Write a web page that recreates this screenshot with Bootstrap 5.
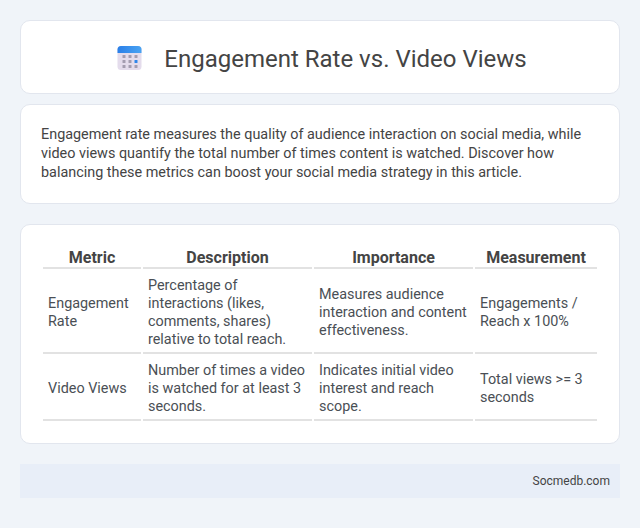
<!DOCTYPE html>
<html lang="en">
<head>
<meta charset="utf-8">
<title>Engagement Rate vs. Video Views</title>
<link href="https://cdn.jsdelivr.net/npm/bootstrap@5.3.0/dist/css/bootstrap.min.css" rel="stylesheet">
<script src="https://cdn.jsdelivr.net/npm/bootstrap@5.3.0/dist/js/bootstrap.bundle.min.js"></script>
<style>
body{background:#f0f4f9;font-family:Roboto,sans-serif;color:#444;padding:20px;margin:0}
.sheet{background:#fff;border:1px solid #e2e6ee;border-radius:10px}
.head-sheet{height:74px;margin-bottom:10px;gap:19px}
.head-sheet h1{font-size:24px;font-weight:400;color:#444;margin:0;line-height:1.2;padding-top:5px}
.intro-sheet{height:100px;margin-bottom:20px;padding:20px 20px;font-size:14.4px;line-height:19px;color:#444}
.table-sheet{height:220px;margin-bottom:20px;padding:21px 20px}
.metric-table{border-collapse:separate;border-spacing:2px;width:558px;table-layout:fixed;font-size:14.4px;line-height:18px;color:#4a4f55}
.metric-table th{font-size:16px;font-weight:700;line-height:19px;text-align:center;color:#444;border-bottom:2px solid #e2e2e2;padding:0;height:21px}
.metric-table td{border-bottom:2px solid #e2e2e2;padding:5.5px 5px 3.5px;vertical-align:middle}
.foot-bar{background:#e8eef8;height:34px;padding:0 10px;font-size:12px;color:#444}
</style>
</head>
<body>
<div class="sheet head-sheet d-flex align-items-center justify-content-center">
<svg width="32" height="32" viewBox="-0.5 -1 32 32" aria-hidden="true">
<defs><linearGradient id="capfill" x1="0" y1="0" x2="1" y2="0"><stop offset="0" stop-color="#2a7fe8"/><stop offset="1" stop-color="#4aa3f2"/></linearGradient></defs>
<rect x="4" y="4" width="24" height="24" rx="3.5" fill="#e4dcec"/>
<path d="M4 11V7.5A3.5 3.5 0 0 1 7.5 4h17A3.5 3.5 0 0 1 28 7.5V11z" fill="url(#capfill)"/>
<g fill="#a49db0"><rect x="9" y="13" width="3" height="3" rx=".5"/><rect x="15" y="13" width="3" height="3" rx=".5"/><rect x="21" y="13" width="3" height="3" rx=".5"/><rect x="9" y="18" width="3" height="3" rx=".5"/><rect x="15" y="18" width="3" height="3" rx=".5"/><rect x="9" y="23" width="3" height="3" rx=".5"/><rect x="15" y="23" width="3" height="3" rx=".5"/><rect x="21" y="23" width="3" height="3" rx=".5"/></g>
<rect x="21" y="18" width="3" height="3" rx=".5" fill="#2f86ea"/>
</svg>
<h1>Engagement Rate vs. Video Views</h1>
</div>
<div class="sheet intro-sheet">Engagement rate measures the quality of audience interaction on social media, while video views quantify the total number of times content is watched. Discover how balancing these metrics can boost your social media strategy in this article.</div>
<div class="sheet table-sheet">
<table class="metric-table">
<colgroup><col style="width:98px"><col style="width:169px"><col style="width:159px"><col style="width:122px"></colgroup>
<thead><tr><th>Metric</th><th>Description</th><th>Importance</th><th>Measurement</th></tr></thead>
<tbody>
<tr><td>Engagement Rate</td><td>Percentage of interactions (likes, comments, shares) relative to total reach.</td><td>Measures audience interaction and content effectiveness.</td><td>Engagements / Reach x 100%</td></tr>
<tr><td>Video Views</td><td>Number of times a video is watched for at least 3 seconds.</td><td>Indicates initial video interest and reach scope.</td><td>Total views &gt;= 3 seconds</td></tr>
</tbody>
</table>
</div>
<div class="foot-bar d-flex align-items-center justify-content-end">Socmedb.com</div>
</body>
</html>
